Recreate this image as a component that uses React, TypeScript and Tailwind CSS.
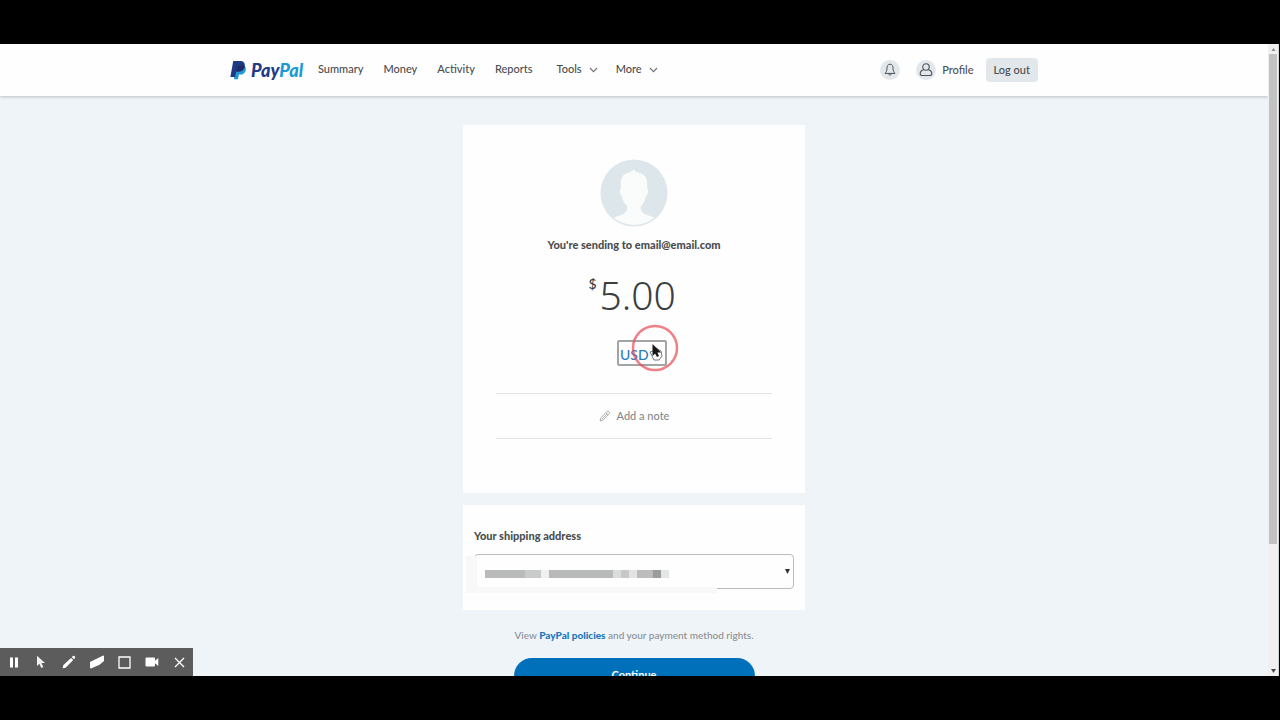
import React from "react";

const navLinks = ["Summary", "Money", "Activity", "Reports"];
const navMenus = ["Tools", "More"];

const redaction = [
  { w: "w-10", c: "bg-[#b9bbba]" },
  { w: "w-4", c: "bg-[#c9cbca]" },
  { w: "w-2", c: "bg-[#f0f0f0]" },
  { w: "w-16", c: "bg-[#b8bab9]" },
  { w: "w-2", c: "bg-[#dadcda]" },
  { w: "w-2", c: "bg-[#c6c8c6]" },
  { w: "w-2", c: "bg-[#e2e3e2]" },
  { w: "w-4", c: "bg-[#bbbcbb]" },
  { w: "w-2", c: "bg-[#9a9c9b]" },
  { w: "w-2", c: "bg-[#e4e5e5]" },
];

function Chevron() {
  return (
    <svg width="9" height="6" viewBox="0 0 9 6" fill="none" stroke="#6c7378" strokeWidth="1.1" className="mt-0.5" aria-hidden="true">
      <path d="M1 1 L4.5 4.6 L8 1" />
    </svg>
  );
}

function Logo() {
  return (
    <a href="#home" aria-label="PayPal" className="flex w-[76px] items-center gap-1">
      <svg width="17" height="20" viewBox="0 0 17 20" aria-hidden="true">
        <path d="M5.2 5.5 H12 C15 5.5 16.4 7.2 15.8 9.9 C15.2 13 13 14.6 10.2 14.6 H8.9 L8 19.2 H4 Z" fill="#1f9ad6" />
        <path d="M3.2 1 H10 C13.6 1 15.3 3 14.7 6.2 C14 9.9 11.5 11.6 8.2 11.6 H6.2 L5.1 17 H0.4 Z" fill="#1d3b84" />
        <path d="M6.2 11.6 H8.2 C11.5 11.6 14 9.9 14.7 6.2 L14.6 5.8 C12.9 5.2 8.2 5.5 7.4 5.7 Z" fill="#202a66" />
      </svg>
      <span className="text-[18px] leading-5 font-black text-[#1f3a86] italic">
        Pay<span className="text-[#1b9ad7]">Pal</span>
      </span>
    </a>
  );
}

function Header() {
  return (
    <header className="relative h-[52px] shrink-0 bg-[#fefefe] shadow-[0_1px_3px_rgba(0,0,0,0.22)]">
      <div className="mx-auto flex h-full max-w-[808px] items-center justify-between">
        <div className="flex items-center gap-3">
          <Logo />
          <nav className="flex items-center gap-6 pb-0.5 text-[11px] font-medium text-[#4a4e51]">
            <div className="flex gap-5">
              {navLinks.map((l) => (
                <a key={l} href={"#" + l.toLowerCase()}>{l}</a>
              ))}
            </div>
            <div className="flex gap-[18px]">
              {navMenus.map((m) => (
                <button key={m} type="button" className="flex items-center gap-[7px]">
                  {m}
                  <Chevron />
                </button>
              ))}
            </div>
          </nav>
        </div>
        <div className="flex items-center text-[11px] font-medium text-[#4a4e51]">
          <button type="button" aria-label="Notifications" className="mr-4 flex size-5 items-center justify-center rounded-full bg-[#e1e7eb]">
            <svg width="12" height="14" viewBox="0 0 12 14" fill="none" stroke="#4d5357" strokeWidth="1" aria-hidden="true">
              <path d="M6 1.2 C3.7 1.2 3 3.2 3 5.2 C3 8 2.2 9 1 10.4 H11 C9.8 9 9 8 9 5.2 C9 3.2 8.3 1.2 6 1.2 Z M4.6 10.6 C4.8 12.6 7.2 12.6 7.4 10.6" />
            </svg>
          </button>
          <a href="#profile" className="mr-3 flex items-center gap-1.5">
            <span className="flex size-5 items-center justify-center rounded-full bg-[#e1e7eb]">
              <svg width="14" height="14" viewBox="0 0 14 14" fill="none" stroke="#4d5357" strokeWidth="1.1" aria-hidden="true">
                <circle cx="7" cy="4" r="3.2" />
                <path d="M4.8 6.8 C2.4 7.3 1.2 8.9 1.2 10.7 C1.2 12 2.2 12.5 3.4 12.5 H10.6 C11.8 12.5 12.8 12 12.8 10.7 C12.8 8.9 11.6 7.3 9.2 6.8" />
              </svg>
            </span>
            Profile
          </a>
          <button type="button" className="h-6 rounded-sm bg-[#e1e7eb] px-2">Log out</button>
        </div>
      </div>
    </header>
  );
}

function Avatar() {
  return (
    <svg width="68" height="68" viewBox="0 0 68 68" role="img" aria-label="Recipient">
      <defs>
        <clipPath id="face"><circle cx="34" cy="34" r="32" /></clipPath>
      </defs>
      <circle cx="34" cy="34" r="33.5" fill="#dde6ea" />
      <g clipPath="url(#face)">
        <path
          d="M34 10 C35 13 37 13 40 14 C46 16 48 21 47 29 C49 30 48 36 46 37 C45 42 43 45 41 47 C40 51 42 54 47 56 C54 58 57 60 60 63 V70 H8 V63 C11 60 14 58 21 56 C26 54 28 51 27 47 C24 44 22 41 22 37 C20 36 19 31 21 29 C20 20 22 16 27 14 C30 13 33 12 34 10 Z"
          fill="#fafcfc"
        />
      </g>
    </svg>
  );
}

function PaymentCard() {
  return (
    <section className="flex h-[368px] flex-col items-center bg-[#fefefe] px-[33px] pt-[34px]">
      <Avatar />
      <h1 className="mt-2 text-[11px] leading-5 font-black text-[#4a4e51]">You're sending to email@email.com</h1>
      <div className="mt-[15px] flex items-start gap-[3px] text-[#3b3f42]">
        <label htmlFor="amount" className="pt-1 text-sm leading-5 font-medium">$</label>
        <input id="amount" defaultValue="5.00" inputMode="decimal" className="w-20 bg-transparent font-['Noto_Sans',sans-serif] text-[39px] leading-[50px] font-light outline-none" />
      </div>
      <div className="relative mt-5 ml-4">
        <button type="button" className="flex h-[26px] w-[50px] items-center rounded-xs border-2 border-[#a2a4a5] px-px pt-1 text-[14px] leading-5 font-medium text-[#2c7cba]">
          USD
        </button>
        <svg className="pointer-events-none absolute -top-4 left-3.5" width="48" height="48" viewBox="0 0 48 48" aria-hidden="true">
          <circle cx="24" cy="24" r="22" fill="none" stroke="#ea4a55" strokeOpacity="0.7" strokeWidth="2.5" />
          <path d="M19 28 L21.5 27 L25 30 V24 L30 27 L31 32 L28 36 H23 Z" fill="#fff" stroke="#666" strokeWidth="0.9" />
          <path d="M21.5 20 V32 L24.2 29.5 L26 33 L28 32 L26.4 28.6 H30 Z" fill="#161616" />
        </svg>
      </div>
      <button type="button" className="mt-[27px] flex h-[46px] w-full items-center justify-center gap-1.5 border-y border-[#dfe5e6] text-[11px] font-medium text-[#858a8c]">
        <svg width="12" height="12" viewBox="0 0 12 12" fill="none" stroke="#a3a7a9" strokeWidth="0.9" aria-hidden="true">
          <path d="M1 11 L2 7.6 L8 1.6 C9.4 0.4 11.4 2.4 10.2 3.8 L4.2 9.9 Z M7 2.8 L9.2 5 M3.2 8.8 L8 4" />
        </svg>
        Add a note
      </button>
    </section>
  );
}

function ShippingCard() {
  return (
    <section className="mt-3 bg-[#fefefe] px-[11px] pt-[21px] pb-[21px]">
      <label htmlFor="address" className="block text-[11px] leading-5 font-black text-[#4a4e51]">Your shipping address</label>
      <div className="relative mt-2">
        <select id="address" className="block h-[35px] w-full appearance-none rounded-sm border border-[#b9bbbc] bg-[#fefefe] px-3 text-[11px]">
          <option value="saved" />
        </select>
        <svg className="pointer-events-none absolute top-[15px] right-1" width="5" height="5" viewBox="0 0 5 5" aria-hidden="true">
          <path d="M0 0 H5 L2.5 5 Z" fill="#333" />
        </svg>
        <div className="pointer-events-none absolute top-0.5 -left-2 h-[37px] w-[251px] border-b-[6px] border-l-[11px] border-[#f8f8f8] bg-[#fefefe] pt-3.5 pl-2">
          <div className="flex h-2">
            {redaction.map((r, i) => (
              <span key={i} className={r.w + " " + r.c} />
            ))}
          </div>
        </div>
      </div>
    </section>
  );
}

function RecorderBar() {
  const btn = "flex flex-1 items-center justify-center";
  return (
    <div role="toolbar" aria-label="Recorder" className="absolute bottom-0 left-0 flex h-7 w-[193px] bg-[#5c5c5c]">
      <button type="button" aria-label="Pause" className={btn}>
        <svg width="10" height="11" viewBox="0 0 10 11" fill="#fff"><path d="M1 0.5 H4 V10.5 H1 Z M6 0.5 H9 V10.5 H6 Z" /></svg>
      </button>
      <button type="button" aria-label="Pointer" className={btn}>
        <svg width="10" height="14" viewBox="0 0 10 14" fill="#f2f2f2"><path d="M1 0.8 V11 L3.4 8.8 L5.3 13 L7.3 12.1 L5.5 8 H9 Z" /></svg>
      </button>
      <button type="button" aria-label="Pen" className={btn}>
        <svg width="14" height="14" viewBox="0 0 14 14" fill="#fff"><path d="M0.7 13.3 L1.2 10.3 L9 2.9 L11.2 5.1 L3.6 12.7 Z M9.8 2.1 L11 1 Q11.8 0.4 12.6 1.2 Q13.6 2.2 13 3.1 L11.9 4.3 Z" /></svg>
      </button>
      <button type="button" aria-label="Eraser" className={btn}>
        <svg width="16" height="14" viewBox="0 0 16 14" fill="#fff"><path d="M1 7 L14.2 0.6 L15 1 V6 L10.5 9.8 L2 13.6 L1 12.8 Z" /></svg>
      </button>
      <button type="button" aria-label="Frame" className={btn}>
        <svg width="13" height="13" viewBox="0 0 13 13" fill="none" stroke="#fff" strokeWidth="1.3"><path d="M1 1 H12 V12 H1 Z" /></svg>
      </button>
      <button type="button" aria-label="Camera" className={btn}>
        <svg width="14" height="10" viewBox="0 0 14 10" fill="#fff"><path d="M0.5 1.5 Q0.5 0.5 1.5 0.5 H9 Q10 0.5 10 1.5 V3.8 L13.3 1 V9 L10 6.2 V8.5 Q10 9.5 9 9.5 H1.5 Q0.5 9.5 0.5 8.5 Z" /></svg>
      </button>
      <button type="button" aria-label="Close" className={btn}>
        <svg width="11" height="11" viewBox="0 0 11 11" fill="none" stroke="#fff" strokeWidth="1.3"><path d="M1 1 L10 10 M10 1 L1 10" /></svg>
      </button>
    </div>
  );
}

function Scrollbar() {
  return (
    <div aria-hidden="true" className="flex w-[11px] shrink-0 flex-col items-center border-r border-[#d5d5d5] bg-[#f0f0f0]">
      <svg width="9" height="10" viewBox="0 0 9 10"><path d="M2.5 7 L4.5 4 L6.5 7 Z" fill="#8b8b8b" /></svg>
      <div className="h-[490px] w-2 bg-[#c2c2c2]" />
      <svg className="mt-auto" width="9" height="10" viewBox="0 0 9 10"><path d="M2 3 L4.5 7 L7 3 Z" fill="#4a4a4a" /></svg>
    </div>
  );
}

export default function App() {
  return (
    <div className="flex h-screen bg-black py-11 pr-px font-[Lato,sans-serif]">
      <div className="relative flex min-w-0 flex-1 flex-col overflow-hidden bg-[#eff4f8]">
        <Header />
        <main className="mx-auto w-full max-w-[342px] pt-[29px]">
          <PaymentCard />
          <ShippingCard />
          <p className="mt-4 text-center text-[10px] leading-[18px] font-medium text-[#8a8f92]">
            View <a href="#policies" className="font-black text-[#2077b8]">PayPal policies</a> and your payment method rights.
          </p>
          <button type="button" className="mx-auto mt-3.5 block h-9 w-[241px] rounded-full bg-[#0070ba] pb-0.5 text-[11px] font-bold text-white">
            Continue
          </button>
        </main>
        <RecorderBar />
      </div>
      <Scrollbar />
    </div>
  );
}
